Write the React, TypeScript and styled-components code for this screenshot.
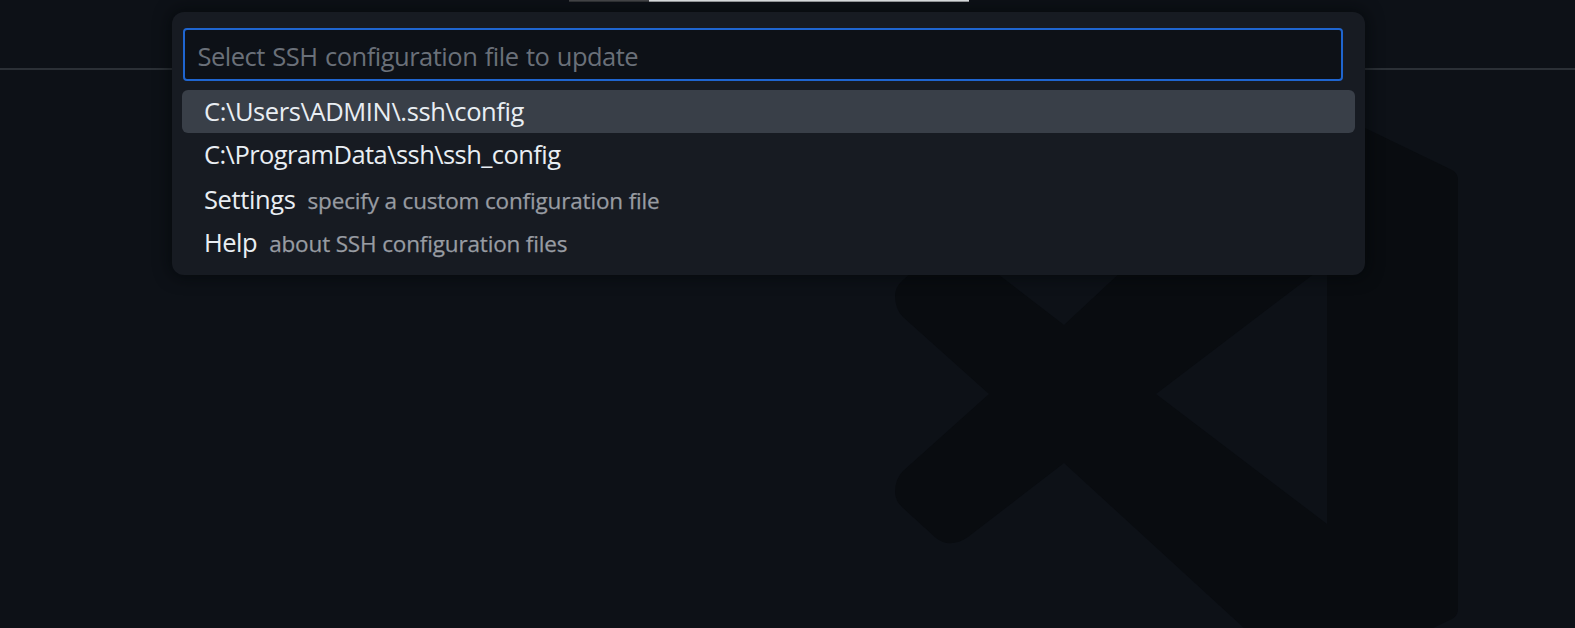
import React from "react";
import styled, { createGlobalStyle } from "styled-components";

const GlobalStyle = createGlobalStyle`
  *, *::before, *::after { box-sizing: border-box; }
  body {
    margin: 0;
    background: #0d1117;
    overflow: hidden;
    font-family: "Open Sans", "Noto Sans", sans-serif;
  }
`;

const Window = styled.div`
  position: relative;
  display: flex;
  flex-direction: column;
  height: 628px;
  overflow: hidden;
  background: #0d1117;
`;

const TitleBar = styled.header`
  flex: none;
  display: flex;
  height: 70px;
  padding-left: 569px;
  border-bottom: 2px solid #2b3036;
`;

const TitleEdge = styled.span<{ $width: number; $color: string; $shade: string }>`
  width: ${(p) => p.$width}px;
  height: 2px;
  background: ${(p) => p.$color};
  border-bottom: 1px solid ${(p) => p.$shade};
`;

const EditorArea = styled.main`
  flex: 1;
  min-height: 0;
`;

const Watermark = styled.svg`
  display: block;
  width: 100%;
  height: 558px;
  fill: #090c10;
`;

const QuickPick = styled.section`
  position: absolute;
  top: 12px;
  left: 172px;
  width: 1193px;
  height: 263px;
  padding: 16px 10px 0;
  border-radius: 12px;
  background: #171b22;
  box-shadow: 0 0 16px 2px rgba(4, 6, 8, 0.62);
`;

const SearchInput = styled.input`
  display: block;
  width: 1160px;
  height: 53px;
  margin: 0 0 8px 1px;
  padding: 3px 12px 0 12.5px;
  border: 2px solid #1f65cf;
  border-radius: 4px;
  outline: none;
  background: #0d1117;
  color: #e6edf3;
  font: 400 25.5px "Open Sans", "Noto Sans", sans-serif;
  letter-spacing: -0.5px;
  word-spacing: 1.3px;
  &::placeholder {
    color: #6a7079;
    opacity: 1;
  }
`;

const Options = styled.ul`
  margin: 0;
  padding: 0.6px 0 0;
  list-style: none;
`;

const Option = styled.li<{ $focused?: boolean; $height: number }>`
  display: flex;
  align-items: flex-end;
  height: ${(p) => p.$height}px;
  padding-left: 22px;
  border-radius: 6px;
  line-height: 43px;
  background: ${(p) => (p.$focused ? "#393f48" : "transparent")};
`;

const OptionText = styled.div`
  display: flex;
  align-items: baseline;
  gap: 12px;
`;

const Label = styled.span<{ $spacing: number }>`
  color: #e9eef3;
  font-size: 25.5px;
  letter-spacing: ${(p) => p.$spacing}px;
  white-space: pre;
`;

const Description = styled.span`
  color: #989ca2;
  font-size: 22.5px;
  font-weight: 500;
  letter-spacing: -0.16px;
  white-space: pre;
  -webkit-text-stroke: 0.25px #989ca2;
`;

const options = [
  { label: "C:\\Users\\ADMIN\\.ssh\\config", spacing: -0.4, height: 43 },
  { label: "C:\\ProgramData\\ssh\\ssh_config", spacing: -0.57, height: 43.2 },
  { label: "Settings", spacing: -0.38, height: 46, description: "specify a custom configuration file" },
  { label: "Help", spacing: -0.5, height: 43, description: "about SSH configuration files" },
];

export default function App() {
  return (
    <Window>
      <GlobalStyle />
      <TitleBar>
        <TitleEdge $width={80} $color="#46474a" $shade="#323437" />
        <TitleEdge $width={320} $color="#e4e7ea" $shade="#9da0a3" />
      </TitleBar>
      <EditorArea>
        <Watermark viewBox="0 70 1575 558" aria-hidden="true">
          <path
            fillRule="evenodd"
            d="M989 394 L903 471 Q895 479 895 492 Q895 501 903 508 L936 538 Q950 549 968 537 L1064 463 L1244 628 Q1260 640 1280 640 L1365 660 L1452 619 Q1458 616 1458 609 L1458 180 Q1458 173 1452 170 L1365 128 L1300 105 L1064 325 L968 251 Q950 239 936 250 L903 280 Q895 287 895 296 Q895 309 903 317 Z M1156 394 L1327 264 L1327 524 Z"
          />
        </Watermark>
      </EditorArea>
      <QuickPick>
        <SearchInput placeholder="Select SSH configuration file to update" />
        <Options>
          {options.map((o, i) => (
            <Option key={o.label} $focused={i === 0} $height={o.height}>
              <OptionText>
                <Label $spacing={o.spacing}>{o.label}</Label>
                {o.description && <Description>{o.description}</Description>}
              </OptionText>
            </Option>
          ))}
        </Options>
      </QuickPick>
    </Window>
  );
}
